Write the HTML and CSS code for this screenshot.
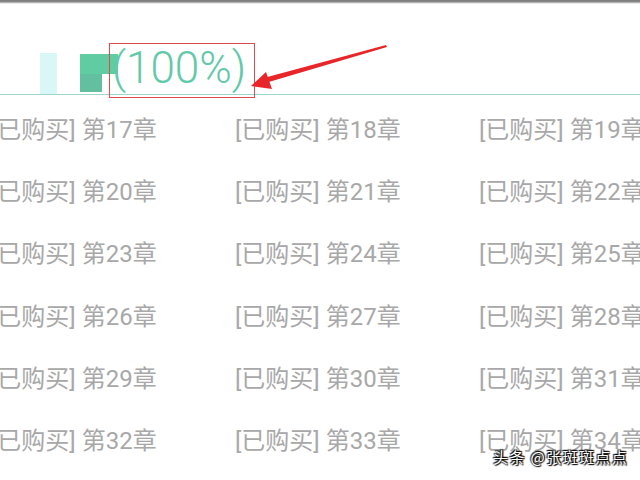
FILE: index.html
```html
<!DOCTYPE html>
<html lang="zh-CN">
<head>
  <meta charset="utf-8">
  <link rel="stylesheet" href="styles.css">
</head>
<body>
  <div class="screen">
    <div class="status-edge"></div>

    <!-- download progress header -->
    <div class="progress-head">
      <span class="ghost-block"></span>
      <span class="book-mark">
        <span class="mark-top"></span>
        <span class="mark-stem"></span>
      </span>
      <span class="percent">(100%)</span>
    </div>

    <div class="chapter-grid">
      <div class="chapter">[已购买] 第17章</div>
      <div class="chapter">[已购买] 第18章</div>
      <div class="chapter">[已购买] 第19章</div>
      <div class="chapter">[已购买] 第20章</div>
      <div class="chapter">[已购买] 第21章</div>
      <div class="chapter">[已购买] 第22章</div>
      <div class="chapter">[已购买] 第23章</div>
      <div class="chapter">[已购买] 第24章</div>
      <div class="chapter">[已购买] 第25章</div>
      <div class="chapter">[已购买] 第26章</div>
      <div class="chapter">[已购买] 第27章</div>
      <div class="chapter">[已购买] 第28章</div>
      <div class="chapter">[已购买] 第29章</div>
      <div class="chapter">[已购买] 第30章</div>
      <div class="chapter">[已购买] 第31章</div>
      <div class="chapter">[已购买] 第32章</div>
      <div class="chapter">[已购买] 第33章</div>
      <div class="chapter">[已购买] 第34章</div>
    </div>

    <!-- annotation drawn over the screenshot -->
    <div class="mark-box"></div>
    <svg class="mark-arrow" width="640" height="120" viewBox="0 0 640 120">
      <polygon points="386,45 387,47 262,84 260,79" fill="#e8262a"/>
      <polygon points="251,86 266,72 272,89" fill="#e8262a"/>
    </svg>

    <div class="watermark">头条 @张斑斑点点</div>
  </div>
</body>
</html>
```

FILE: styles.css
```css
:root {
  --teal: #62c9a9;
  --teal-line: #9fd6cc;
  --grey-text: #a8a8a8;
  --mark-red: #e04a4a;
}

* {
  box-sizing: border-box;
}

body {
  margin: 0;
  background: #fff;
  font-family: "Roboto", "Noto Sans CJK SC", sans-serif;
}

.screen {
  position: relative;
  width: 640px;
  height: 480px;
  overflow: hidden;
  background: #fff;
}

.status-edge {
  height: 4px;
  background: linear-gradient(to bottom, #7a7a7a 0, #8c8c8c 2px, #d8d8d8 3px, #fff 4px);
}

.progress-head {
  display: flex;
  align-items: flex-end;
  height: 91px;
  padding-left: 40px;
  border-bottom: 1px solid var(--teal-line);
}

.ghost-block {
  width: 17px;
  height: 41px;
  background: #d9f7f7;
}

.book-mark {
  display: flex;
  flex-direction: column;
  margin-left: 23px;
  margin-bottom: 2px;
  width: 40px;
}

.mark-top {
  width: 38px;
  height: 20px;
  background: #5fcca2;
}

.mark-stem {
  width: 22px;
  height: 18px;
  background: #62c0a0;
}

.percent {
  margin-left: -8px;
  font-size: 44px;
  font-weight: 300;
  line-height: 52px;
  color: var(--teal);
}

.chapter-grid {
  display: grid;
  grid-template-columns: repeat(3, 244px);
  grid-auto-rows: 62.3px;
  margin-left: -9px;
  padding-top: 1px;
}

.chapter {
  display: flex;
  align-items: center;
  font-size: 24px;
  color: var(--grey-text);
  white-space: nowrap;
}

.mark-box {
  position: absolute;
  left: 109px;
  top: 43px;
  width: 146px;
  height: 55px;
  border: 1.5px solid var(--mark-red);
}

.mark-arrow {
  position: absolute;
  left: 0;
  top: 0;
}

.watermark {
  position: absolute;
  left: 493px;
  top: 447px;
  font-size: 15px;
  line-height: 20px;
  letter-spacing: 1.4px;
  color: #fff;
  white-space: nowrap;
  font-family: "Noto Sans CJK SC", sans-serif;
  text-shadow: 0 0 2px #000, 1px 1px 1px #000, -1px -1px 1px #111, 1px -1px 1px #111;
}
```
